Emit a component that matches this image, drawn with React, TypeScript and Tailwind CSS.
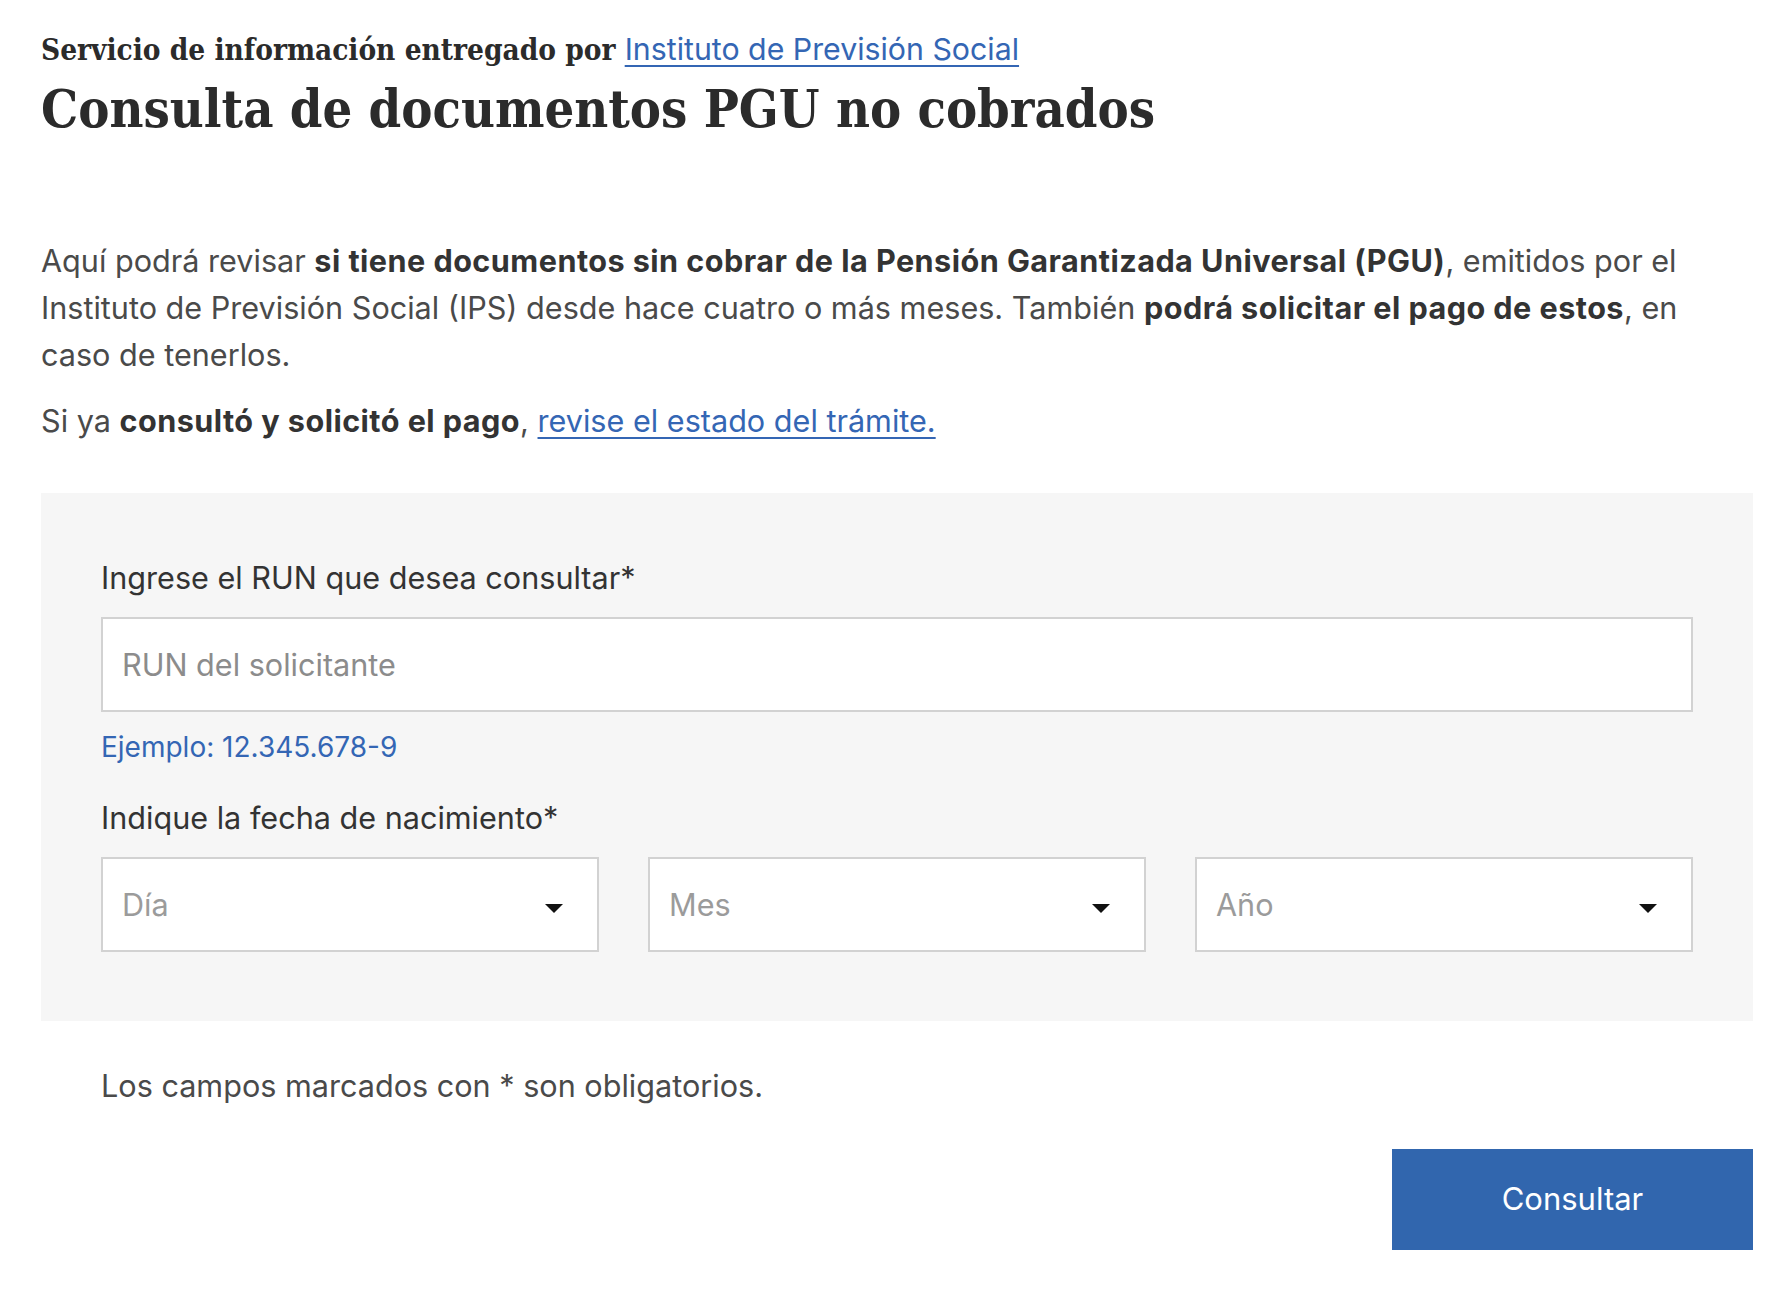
import React from 'react'

const body = "font-['Inter',_'Roboto',_'Liberation_Sans',_sans-serif]"
const slab = "font-['DejaVu_Serif_Condensed',_'DejaVu_Serif',_'Liberation_Serif',_serif] font-stretch-condensed"
const strong = 'font-bold tracking-[0.015em] text-[#333]'

const Caret = () => (
  <svg width="18" height="9" viewBox="0 0 18 9" className="mt-[8px] shrink-0">
    <polygon points="0,0 18,0 9,9" fill="#111" />
  </svg>
)

const SelectBox = ({ placeholder }: { placeholder: string }) => (
  <div className="flex h-[95px] items-center justify-between border-2 border-[#d2d2d2] bg-white pl-[19px] pr-[34px]">
    <span className="text-[30.6px] text-[#9b9b9b]">{placeholder}</span>
    <Caret />
  </div>
)

export default function App() {
  return (
    <div className={`${body} min-h-screen bg-white pl-[41px] pr-[35px] pt-[31px] pb-[52px] text-[#4a4a4a]`}>
      <p className="text-[29.5px] leading-[36px] text-[#2b2b2b]">
        <span className={`${slab} font-bold`}>Servicio de información entregado por </span>
        <a href="#" className={`${body} text-[30.3px] text-[#3466b4] underline decoration-2 underline-offset-[5px]`}>
          Instituto de Previsión Social
        </a>
      </p>
      <h1 className={`${slab} mt-[9px] text-[52px] font-bold leading-[64px] text-[#2b2b2b]`}>
        Consulta de documentos PGU no cobrados
      </h1>

      <p className="mt-[96px] whitespace-nowrap text-[30.6px] leading-[47px]">
        Aquí podrá revisar <b className={strong}>si tiene documentos sin cobrar de la Pensión Garantizada Universal (PGU)</b>, emitidos por el
        <br />
        Instituto de Previsión Social (IPS) desde hace cuatro o más meses. También <b className={strong}>podrá solicitar el pago de estos</b>, en
        <br />
        caso de tenerlos.
      </p>
      <p className="mt-[19px] text-[30.6px] leading-[47px]">
        Si ya <b className={strong}>consultó y solicitó el pago</b>,{' '}
        <a href="#" className="text-[#3466b4] underline decoration-2 underline-offset-[5px]">
          revise el estado del trámite.
        </a>
      </p>

      <div className="mt-[49px] bg-[#f6f6f6] px-[60px] pt-[61px] pb-[69px]">
        <label className="block text-[30.6px] leading-[47px] text-[#333]">Ingrese el RUN que desea consultar*</label>
        <div className="mt-[16px] flex h-[95px] items-center border-2 border-[#d2d2d2] bg-white pl-[19px]">
          <span className="text-[30.6px] text-[#8c8c8c]">RUN del solicitante</span>
        </div>
        <p className="mt-[15px] text-[28px] leading-[40px] text-[#3466b4]">Ejemplo: 12.345.678-9</p>

        <label className="mt-[27px] block text-[30.6px] leading-[47px] text-[#333]">Indique la fecha de nacimiento*</label>
        <div className="mt-[16px] grid grid-cols-3 gap-[49px]">
          <SelectBox placeholder="Día" />
          <SelectBox placeholder="Mes" />
          <SelectBox placeholder="Año" />
        </div>
      </div>

      <p className="mt-[41px] pl-[60px] text-[30.6px] leading-[47px]">Los campos marcados con * son obligatorios.</p>

      <div className="mt-[40px] flex justify-end">
        <button className="h-[101px] w-[361px] bg-[#3166ae] text-[31px] text-white">Consultar</button>
      </div>
    </div>
  )
}
